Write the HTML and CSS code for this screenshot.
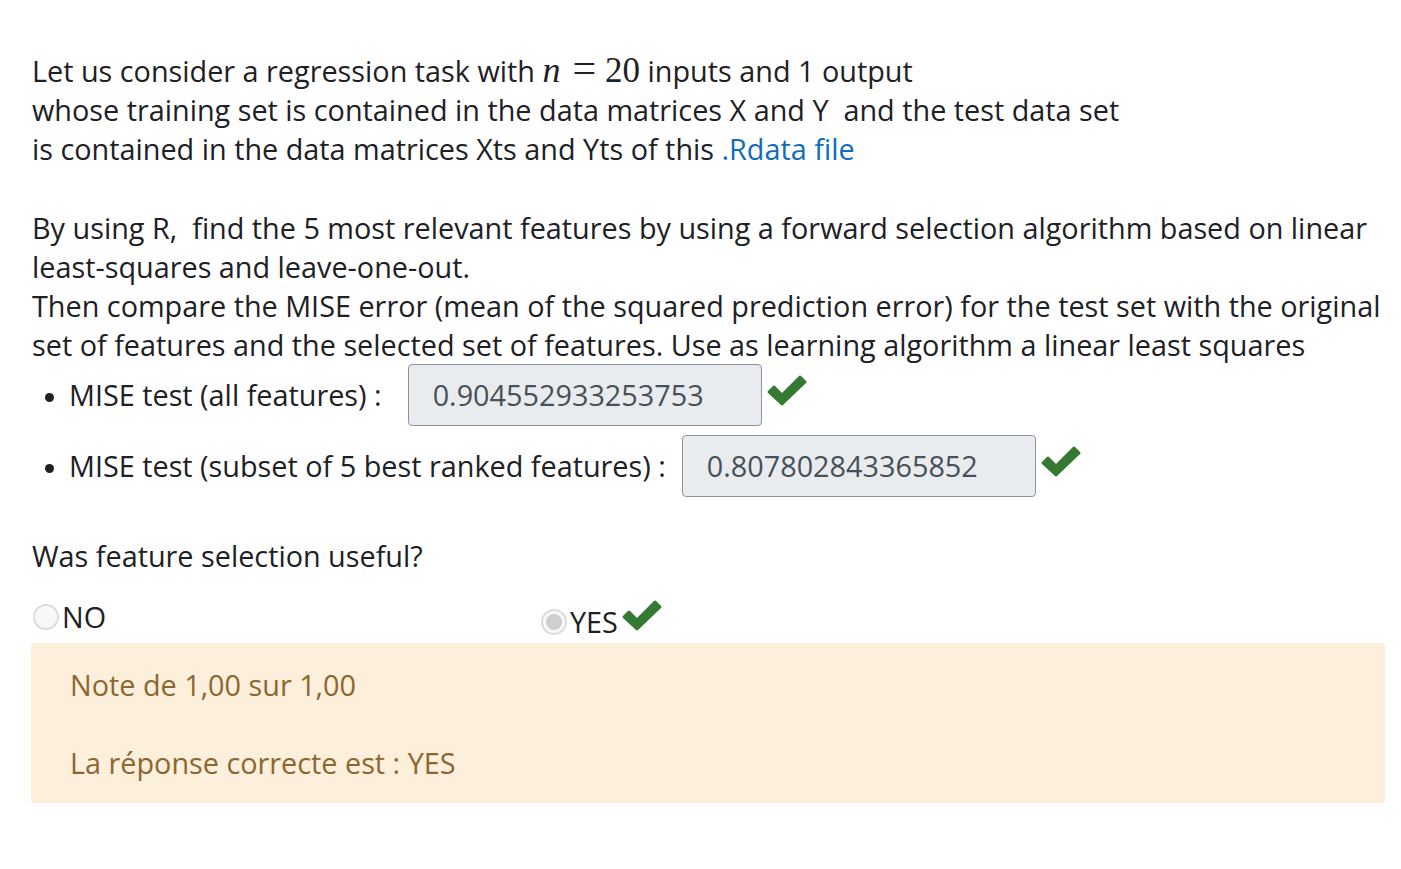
FILE: index.html
```html
<!DOCTYPE html>
<html>
<head>
<meta charset="utf-8">
<link rel="stylesheet" href="styles.css">
</head>
<body>
<div class="question">
  <p class="para">Let us consider a regression task with <span class="math"><i>n</i><span class="eq">=</span>20</span> inputs and 1 output<br>whose training set is contained in the data matrices X and Y&nbsp; and the test data set<br>is contained in the data matrices Xts and Yts of this <a href="#">.Rdata file</a></p>
  <p class="para p2">By using R,&nbsp; find the 5 most relevant features by using a forward selection algorithm based on linear least-squares and leave-one-out.<br>Then compare the MISE error (mean of the squared prediction error) for the test set with the original set of features and the selected set of features. Use as learning algorithm a linear least squares</p>
  <ul class="answers">
    <li class="item"><span class="label label-short">MISE test (all features) :</span><span class="box">0.904552933253753</span><svg class="check" viewBox="0 0 42 34"><path d="M3 19 L8 14 L16 22 L34 4 L39 9 L16 31 Z" fill="#357a32" stroke="#357a32" stroke-width="3" stroke-linejoin="round"/></svg></li>
    <li class="item"><span class="label label-long">MISE test (subset of 5 best ranked features) :</span><span class="box">0.807802843365852</span><svg class="check" viewBox="0 0 42 34"><path d="M3 19 L8 14 L16 22 L34 4 L39 9 L16 31 Z" fill="#357a32" stroke="#357a32" stroke-width="3" stroke-linejoin="round"/></svg></li>
  </ul>
  <p class="para q">Was feature selection useful?</p>
  <div class="radios">
    <div class="opt"><span class="radio"></span><span>NO</span></div>
    <div class="opt yes"><span class="radio checked"></span><span>YES</span><svg class="check small" viewBox="0 0 42 34"><path d="M3 19 L8 14 L16 22 L34 4 L39 9 L16 31 Z" fill="#357a32" stroke="#357a32" stroke-width="3" stroke-linejoin="round"/></svg></div>
  </div>
  <div class="outcome">
    <p>Note de 1,00 sur 1,00</p>
    <p class="last">La réponse correcte est : YES</p>
  </div>
</div>
</body>
</html>
```

FILE: styles.css
```css
html, body {
  margin: 0;
  padding: 0;
  background: #fff;
}
body {
  font-family: "Open Sans", "Noto Sans", sans-serif;
  font-size: 28.8px;
  line-height: 39.2px;
  color: #1d2125;
}
.question {
  padding: 51px 16px 0 32px;
}
.para {
  margin: 0;
}
.p2 {
  margin-top: 39px;
}
a {
  color: #0f6cbf;
  text-decoration: none;
}
.math {
  font-family: "Liberation Serif", "DejaVu Serif", serif;
  font-size: 35px;
  line-height: 0;
}
.math i {
  font-family: "Liberation Serif", serif;
  font-size: 36px;
}
.eq {
  font-size: 42px;
  padding: 0 9px 0 12px;
}
.answers {
  margin: 0;
  padding: 0 0 0 37px;
}
.item {
  list-style: disc;
  height: 62px;
  line-height: 62px;
  margin-bottom: 9px;
}
.item::marker {
  font-size: 24px;
}
.label {
  display: inline-block;
  vertical-align: top;
}
.label-short {
  margin-right: 26px;
}
.label-long {
  margin-right: 16px;
}
.box {
  display: inline-block;
  vertical-align: top;
  box-sizing: border-box;
  width: 354px;
  height: 62px;
  line-height: 60px;
  padding-left: 24px;
  background: #e9ecef;
  border: 1px solid #8f959e;
  border-radius: 4px;
  color: #495057;
}
.check {
  display: inline-block;
  vertical-align: top;
  width: 42px;
  height: 34px;
  margin-top: 9px;
  margin-left: 4px;
}
.q {
  margin-top: 39px;
}
.radios {
  display: grid;
  grid-template-columns: 508px 1fr;
  margin-top: 21px;
  height: 46px;
}
.opt {
  display: flex;
  align-items: center;
  height: 40px;
  margin-left: 1px;
}
.opt.yes {
  margin-top: 5px;
}
.radio {
  box-sizing: border-box;
  width: 26px;
  height: 26px;
  border-radius: 50%;
  border: 2px solid #dcdcdc;
  background: #f8f8f8;
  margin-right: 3px;
  display: flex;
  align-items: center;
  justify-content: center;
}
.radio.checked::after {
  content: "";
  width: 16px;
  height: 16px;
  border-radius: 50%;
  background: #cfcfcf;
}
.check.small {
  margin: -14px 0 0 3px;
}
.outcome {
  margin-left: -1px;
  width: 1354px;
  box-sizing: border-box;
  background: #fcefdc;
  color: #8e662e;
  padding: 22px 39px 21px;
}
.outcome p {
  margin: 0 0 39px;
}
.outcome p.last {
  margin: 0;
}
```
